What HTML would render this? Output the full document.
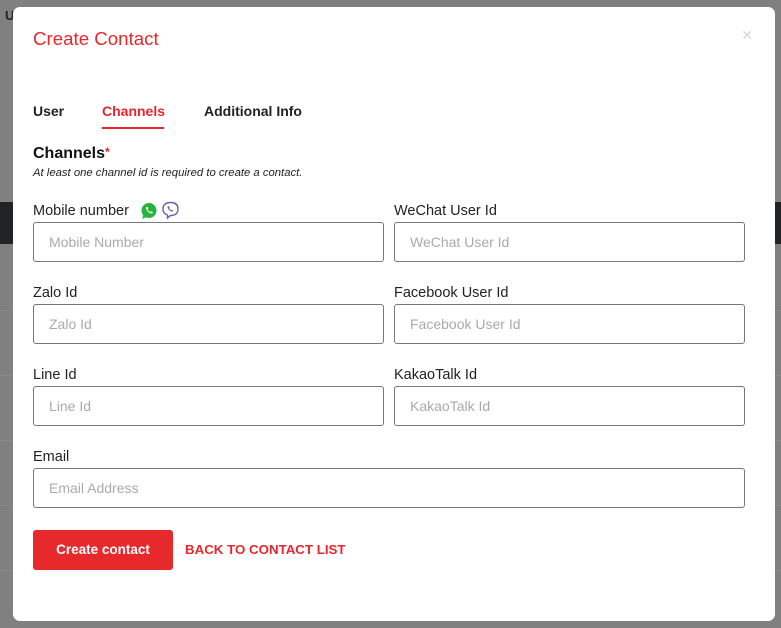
<!DOCTYPE html>
<html><head><meta charset="utf-8"><style>
*{box-sizing:border-box;margin:0;padding:0}
body{width:781px;height:628px;overflow:hidden;background:#808080;font-family:"Liberation Sans",sans-serif;position:relative}
.band{position:absolute;top:202px;height:42px;background:#222326;left:0;width:781px}
.ln{position:absolute;left:0;width:781px;height:1px;background:#8a8a8a}
.modal{position:absolute;left:13px;top:7px;width:762px;height:614px;background:#fff;border-radius:7px}
.t{position:absolute;left:20px;top:21px;font-size:18.7px;color:#e8262b}
.x{position:absolute;right:22px;top:20px;color:#d5d5d5;font-size:14px;font-weight:100}
.tab{position:absolute;top:96px;font-size:14px;font-weight:bold;color:#222}
.h{position:absolute;left:20px;top:138px;font-size:16px;font-weight:bold;color:#111}
.h span{color:#e8262b;font-size:12px;vertical-align:top}
.note{position:absolute;left:20px;top:160px;font-size:11.3px;font-style:italic;color:#222}
.lb{position:absolute;font-size:14.5px;color:#222}
.in{position:absolute;height:40px;border:1px solid #777;border-radius:3px;font-size:14px;color:#aaa;padding:11px 15px}
.btn{position:absolute;left:20px;top:523px;width:140px;height:40px;background:#e8292b;border-radius:3px;color:#fff;font-weight:bold;font-size:13.5px;text-align:center;line-height:40px}
.lk{position:absolute;left:172px;top:535px;color:#e8262b;font-size:13.3px;font-weight:bold}
</style></head><body>
<div style="position:absolute;left:5px;top:8px;font-size:13px;font-weight:bold;color:#222">U</div>
<div class="band"></div>
<div class="ln" style="top:310px"></div><div class="ln" style="top:375px"></div><div class="ln" style="top:440px"></div><div class="ln" style="top:505px"></div><div class="ln" style="top:570px"></div>
<div class="modal">
<div class="t">Create Contact</div>
<div class="x">✕</div>
<div class="tab" style="left:20px">User</div>
<div class="tab" style="left:89px;color:#e8262b">Channels</div>
<div style="position:absolute;left:89px;top:120px;width:62px;height:2px;background:#e8262b"></div>
<div class="tab" style="left:191px">Additional Info</div>
<div class="h">Channels<span>*</span></div>
<div class="note">At least one channel id is required to create a contact.</div>

<div class="lb" style="left:20px;top:196px">Mobile number</div>
<svg style="position:absolute;left:127px;top:195px" width="18" height="18" viewBox="0 0 18 18"><circle cx="9" cy="8.5" r="7.5" fill="#25b33c"/><path d="M2 17l1.5-4 3 2z" fill="#25b33c"/><path d="M6 5.5c0 3 3 6 6 6l1-1.3-1.8-1-1 .8c-1-.5-2-1.5-2.5-2.5l.8-1-1-1.8z" fill="#fff"/></svg>
<svg style="position:absolute;left:148px;top:194px" width="19" height="19" viewBox="0 0 19 19"><path d="M9.5 1.5c4.5 0 7.5 2 7.5 6.5s-3 6.5-7.5 6.5l-3 2.5v-3c-3-1-4.5-3-4.5-6 0-4.5 3-6.5 7.5-6.5z" fill="none" stroke="#6f5ba8" stroke-width="1.4"/><path d="M6.5 5.5c0 2.5 2.5 5 5 5l.8-1-1.4-.8-.7.5c-.8-.4-1.6-1.2-2-2l.5-.7-.8-1.4z" fill="#6f5ba8"/></svg>
<div class="in" style="left:20px;top:215px;width:351px">Mobile Number</div>
<div class="lb" style="left:381px;top:196px">WeChat User Id</div>
<div class="in" style="left:381px;top:215px;width:351px">WeChat User Id</div>

<div class="lb" style="left:20px;top:278px">Zalo Id</div>
<div class="in" style="left:20px;top:297px;width:351px">Zalo Id</div>
<div class="lb" style="left:381px;top:278px">Facebook User Id</div>
<div class="in" style="left:381px;top:297px;width:351px">Facebook User Id</div>

<div class="lb" style="left:20px;top:360px">Line Id</div>
<div class="in" style="left:20px;top:379px;width:351px">Line Id</div>
<div class="lb" style="left:381px;top:360px">KakaoTalk Id</div>
<div class="in" style="left:381px;top:379px;width:351px">KakaoTalk Id</div>

<div class="lb" style="left:20px;top:442px">Email</div>
<div class="in" style="left:20px;top:461px;width:712px">Email Address</div>

<div class="btn">Create contact</div>
<div class="lk">BACK TO CONTACT LIST</div>
</div>
</body></html>
